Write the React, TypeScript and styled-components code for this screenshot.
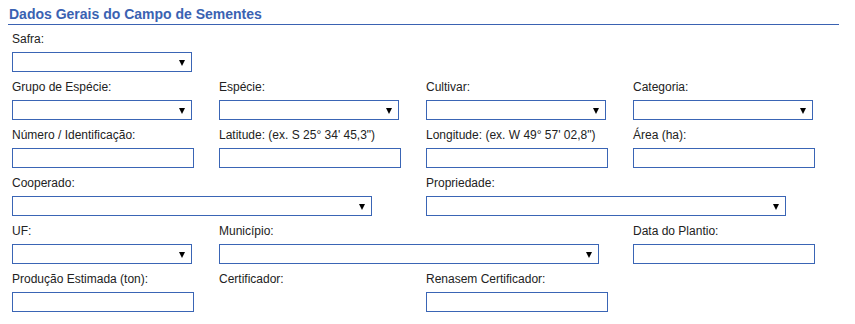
import React from 'react';
import styled, { createGlobalStyle } from 'styled-components';

const GlobalStyle = createGlobalStyle`
  body {
    margin: 0;
    background: #ffffff;
    font-family: 'Liberation Sans', Arial, sans-serif;
  }
`;

const Page = styled.div`
  width: 831px;
  padding: 6px 0 0 8px;
`;

const SectionTitle = styled.h2`
  margin: 0;
  padding: 0 0 2px 1px;
  font-size: 14px;
  line-height: 16px;
  font-weight: bold;
  color: #3a62b2;
  border-bottom: 1px solid #3a62b2;
`;

const FormGrid = styled.div`
  display: grid;
  grid-template-columns: repeat(4, 207px);
  row-gap: 8px;
  padding: 7px 0 0 4px;
`;

const Field = styled.div<{ $span?: number; $newRow?: boolean }>`
  display: flex;
  flex-direction: column;
  grid-column: ${(p) => (p.$newRow ? '1 / ' : '')}span ${(p) => p.$span || 1};
`;

const Label = styled.label`
  font-size: 12px;
  line-height: 14px;
  color: #222;
  margin-bottom: 6px;
  white-space: nowrap;
`;

const SelectBox = styled.div<{ $width: number }>`
  box-sizing: border-box;
  width: ${(p) => p.$width}px;
  height: 20px;
  border: 1px solid #3a65b5;
  background: #fff;
  display: flex;
  align-items: center;
  justify-content: flex-end;
  padding-right: 6px;
`;

const Arrow = styled.span`
  width: 0;
  height: 0;
  border-left: 3px solid transparent;
  border-right: 3px solid transparent;
  border-top: 6px solid #000;
  margin-top: 1px;
`;

const TextInput = styled.input<{ $width?: number }>`
  box-sizing: border-box;
  width: ${(p) => p.$width || 182}px;
  height: 20px;
  border: 1px solid #3a65b5;
  border-radius: 0;
  padding: 0 3px;
  margin: 0;
  outline: none;
  font-family: inherit;
  font-size: 12px;
`;

function Select({ width = 180 }: { width?: number }) {
  return (
    <SelectBox $width={width}>
      <Arrow />
    </SelectBox>
  );
}

export default function App() {
  return (
    <Page>
      <GlobalStyle />
      <SectionTitle>Dados Gerais do Campo de Sementes</SectionTitle>
      <FormGrid>
        <Field $newRow>
          <Label>Safra:</Label>
          <Select />
        </Field>

        <Field $newRow>
          <Label>Grupo de Espécie:</Label>
          <Select />
        </Field>
        <Field>
          <Label>Espécie:</Label>
          <Select />
        </Field>
        <Field>
          <Label>Cultivar:</Label>
          <Select />
        </Field>
        <Field>
          <Label>Categoria:</Label>
          <Select />
        </Field>

        <Field>
          <Label>Número / Identificação:</Label>
          <TextInput />
        </Field>
        <Field>
          <Label>Latitude: (ex. S 25° 34' 45,3")</Label>
          <TextInput />
        </Field>
        <Field>
          <Label>Longitude: (ex. W 49° 57' 02,8")</Label>
          <TextInput />
        </Field>
        <Field>
          <Label>Área (ha):</Label>
          <TextInput />
        </Field>

        <Field $span={2}>
          <Label>Cooperado:</Label>
          <Select width={360} />
        </Field>
        <Field $span={2}>
          <Label>Propriedade:</Label>
          <Select width={360} />
        </Field>

        <Field>
          <Label>UF:</Label>
          <Select />
        </Field>
        <Field $span={2}>
          <Label>Município:</Label>
          <Select width={380} />
        </Field>
        <Field>
          <Label>Data do Plantio:</Label>
          <TextInput />
        </Field>

        <Field>
          <Label>Produção Estimada (ton):</Label>
          <TextInput />
        </Field>
        <Field>
          <Label>Certificador:</Label>
        </Field>
        <Field>
          <Label>Renasem Certificador:</Label>
          <TextInput />
        </Field>
      </FormGrid>
    </Page>
  );
}
